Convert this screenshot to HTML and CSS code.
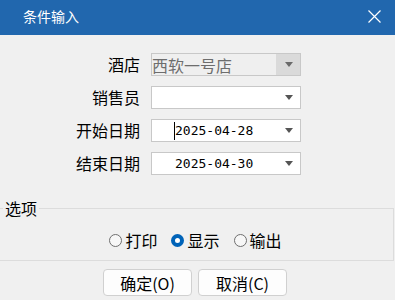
FILE: index.html
```html
<!DOCTYPE html>
<html lang="zh">
<head>
<meta charset="utf-8">
<title>条件输入</title>
<link rel="stylesheet" href="styles.css">
</head>
<body>
<div class="window">
  <header class="titlebar">
    <span class="title">条件输入</span>
    <svg class="close" width="13" height="13" viewBox="0 0 13 13"><path d="M0.5 0.5L12.5 12.5M12.5 0.5L0.5 12.5" stroke="#fff" stroke-width="1.2" fill="none"/></svg>
  </header>
  <main class="form">
    <label class="lbl">酒店</label>
    <div class="combo disabled">
      <span class="value text">西软一号店</span>
      <span class="drop"><svg width="8" height="5" viewBox="0 0 8 5"><path d="M0 0H8L4 5Z" fill="#6a6a6a"/></svg></span>
    </div>
    <label class="lbl">销售员</label>
    <div class="combo">
      <span class="value"></span>
      <span class="drop"><svg width="8" height="5" viewBox="0 0 8 5"><path d="M0 0H8L4 5Z" fill="#555"/></svg></span>
    </div>
    <label class="lbl">开始日期</label>
    <div class="combo">
      <span class="caret"></span>
      <span class="value date">2025-04-28</span>
      <span class="drop"><svg width="8" height="5" viewBox="0 0 8 5"><path d="M0 0H8L4 5Z" fill="#555"/></svg></span>
    </div>
    <label class="lbl">结束日期</label>
    <div class="combo">
      <span class="value date">2025-04-30</span>
      <span class="drop"><svg width="8" height="5" viewBox="0 0 8 5"><path d="M0 0H8L4 5Z" fill="#555"/></svg></span>
    </div>
  </main>
  <fieldset class="options">
    <legend>选项</legend>
    <div class="radios">
      <span class="radio"><span class="dot"></span><span class="rtext">打印</span></span>
      <span class="radio checked"><span class="dot"></span><span class="rtext">显示</span></span>
      <span class="radio"><span class="dot"></span><span class="rtext">输出</span></span>
    </div>
  </fieldset>
  <div class="buttons">
    <button class="btn">确定(O)</button>
    <button class="btn">取消(C)</button>
  </div>
</div>
</body>
</html>
```
FILE: styles.css
```css
html, body {
  margin: 0;
  padding: 0;
  background: #f0f0f0;
}
body {
  width: 395px;
  height: 300px;
  overflow: hidden;
  font-family: "Noto Sans CJK SC", "Noto Sans", sans-serif;
  color: #000;
}
.window {
  display: flex;
  flex-direction: column;
}
.titlebar {
  height: 35px;
  background: #2167ae;
  display: flex;
  align-items: center;
  justify-content: space-between;
  padding: 0 14px 0 23px;
  box-sizing: border-box;
}
.title {
  color: #fff;
  font-size: 14px;
  line-height: 20px;
  margin-top: -3px;
}
.close {
  display: block;
  margin-top: -3px;
}
.form {
  display: grid;
  grid-template-columns: 140px 150px;
  grid-auto-rows: 23px;
  column-gap: 11px;
  row-gap: 10px;
  padding-top: 18px;
}
.lbl {
  font-size: 16px;
  line-height: 23px;
  text-align: right;
  white-space: nowrap;
}
.combo {
  position: relative;
  display: flex;
  align-items: stretch;
  background: #fff;
  border: 1px solid #c8c8c8;
  box-sizing: border-box;
  height: 23px;
}
.combo.disabled {
  background: #efefef;
  border-color: #c8c8c8;
}
.value {
  flex: 1;
  display: flex;
  align-items: center;
  white-space: nowrap;
}
.value.text {
  font-size: 16px;
  color: #6d6d6d;
  padding-left: 0;
}
.value.date {
  font-family: "DejaVu Sans Mono", monospace;
  font-size: 13px;
  padding-left: 23px;
  color: #000;
}
.caret {
  position: absolute;
  left: 22px;
  top: 2px;
  width: 1px;
  height: 18px;
  background: #000;
}
.drop {
  width: 23px;
  display: flex;
  align-items: center;
  justify-content: center;
  padding-left: 1px;
}
.drop svg {
  display: block;
}
.disabled .drop {
  background: #dadada;
}
.options {
  margin: 23px 1px 0 -3px;
  padding: 12px 0 10px;
  border: 1px solid #dcdcdc;
  min-width: 0;
}
.options legend {
  font-size: 16px;
  line-height: 20px;
  padding: 0 2px;
  margin-left: 5px;
}
.radios {
  display: flex;
  justify-content: center;
  gap: 14px;
  height: 20px;
  align-items: center;
}
.radio {
  display: flex;
  align-items: center;
  gap: 3px;
}
.dot {
  width: 13px;
  height: 13px;
  box-sizing: border-box;
  border: 1px solid #6f6f6f;
  border-radius: 50%;
  background: #f7f7f7;
  margin-top: 0;
}
.checked .dot {
  border: 4px solid #0063b8;
  background: #fff;
}
.rtext {
  font-size: 16px;
  line-height: 20px;
}
.buttons {
  display: flex;
  justify-content: center;
  gap: 6px;
  margin-top: 8px;
  padding-right: 5px;
}
.btn {
  width: 89px;
  height: 27px;
  background: #fdfdfd;
  border: 1px solid #d0d0d0;
  border-radius: 4px;
  font-family: "Noto Sans CJK SC", "Noto Sans", sans-serif;
  font-size: 16px;
  line-height: 20px;
  color: #000;
  padding: 0;
}
```
